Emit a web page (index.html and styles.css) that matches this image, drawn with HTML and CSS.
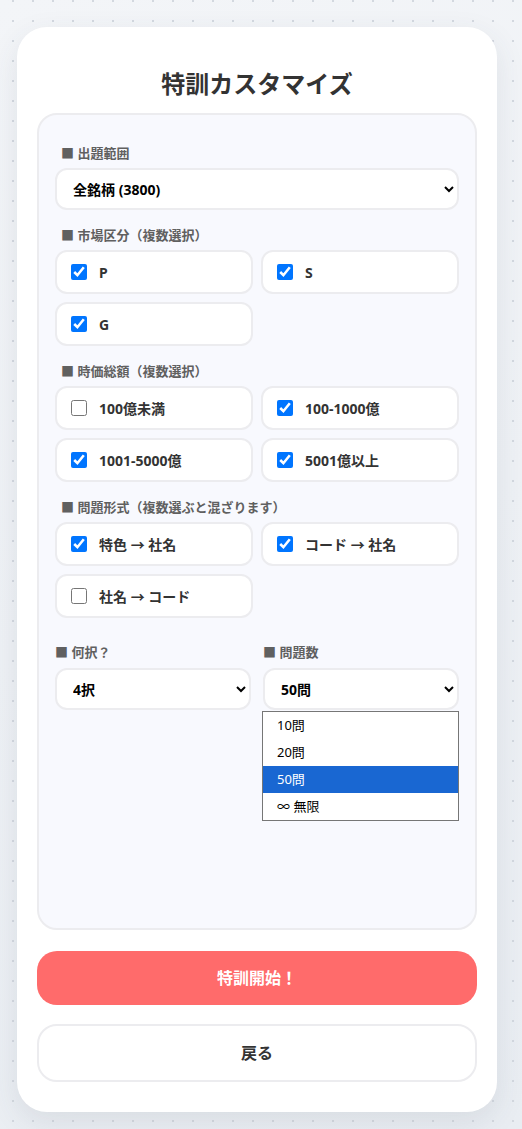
FILE: index.html
```html
<!DOCTYPE html>
<html lang="ja">
<head>
<meta charset="utf-8">
<title>特訓カスタマイズ</title>
<link rel="stylesheet" href="styles.css">
</head>
<body>
<div class="card">
  <h1 class="title">特訓カスタマイズ</h1>
  <div class="panel">
    <div class="group">
      <div class="label">■ 出題範囲</div>
      <select class="select">
        <option>全銘柄 (3800)</option>
      </select>
    </div>
    <div class="group">
      <div class="label">■ 市場区分（複数選択）</div>
      <div class="grid">
        <label class="item"><input type="checkbox" checked><span>P</span></label>
        <label class="item"><input type="checkbox" checked><span>S</span></label>
        <label class="item"><input type="checkbox" checked><span>G</span></label>
      </div>
    </div>
    <div class="group">
      <div class="label">■ 時価総額（複数選択）</div>
      <div class="grid">
        <label class="item"><input type="checkbox"><span>100億未満</span></label>
        <label class="item"><input type="checkbox" checked><span>100-1000億</span></label>
        <label class="item"><input type="checkbox" checked><span>1001-5000億</span></label>
        <label class="item"><input type="checkbox" checked><span>5001億以上</span></label>
      </div>
    </div>
    <div class="group">
      <div class="label">■ 問題形式（複数選ぶと混ざります）</div>
      <div class="grid">
        <label class="item"><input type="checkbox" checked><span>特色 → 社名</span></label>
        <label class="item"><input type="checkbox" checked><span>コード → 社名</span></label>
        <label class="item"><input type="checkbox"><span>社名 → コード</span></label>
      </div>
    </div>
    <div class="row2">
      <div class="cell">
        <div class="label label-flush">■ 何択？</div>
        <select class="select">
          <option>4択</option>
        </select>
      </div>
      <div class="cell cell-open">
        <div class="label label-flush">■ 問題数</div>
        <select class="select">
          <option>50問</option>
        </select>
        <ul class="popup">
          <li>10問</li>
          <li>20問</li>
          <li class="active">50問</li>
          <li>∞ 無限</li>
        </ul>
      </div>
    </div>
  </div>
  <button class="btn btn-start">特訓開始！</button>
  <button class="btn btn-back">戻る</button>
</div>
</body>
</html>
```
FILE: styles.css
```css
* { box-sizing: border-box; }
html, body { margin: 0; padding: 0; }
body {
  font-family: "Noto Sans", "Noto Sans CJK JP", sans-serif;
  background-color: #eef1f5;
  background-image:
    radial-gradient(circle, #d3d8df 1px, transparent 1.4px),
    linear-gradient(160deg, #f3f5f8 0%, #e9edf2 100%);
  background-size: 20px 20px, 100% 100%;
  background-position: 3px -9px, 0 0;
  min-height: 1129px;
  padding: 27px 0 17px 17px;
}
.card {
  width: 480px;
  background: #fff;
  border-radius: 30px;
  box-shadow: 0 10px 30px rgba(60, 70, 90, 0.10);
  padding: 40px 20px 30px;
}
.title {
  margin: 0 0 12px;
  text-align: center;
  font-size: 24px;
  line-height: 34px;
  font-weight: 700;
  color: #333;
}
.panel {
  height: 817px;
  background: #f8f9fe;
  border: 2px solid #ececef;
  border-radius: 20px;
  padding: 29px 16px 16px;
}
.group { margin-bottom: 16px; }
.label {
  font-size: 13px;
  line-height: 18px;
  font-weight: 700;
  color: #606060;
  margin: 0 0 6px 6px;
}
.label-flush { margin-left: 0; margin-bottom: 7px; }
.select {
  display: block;
  width: 100%;
  height: 42px;
  border: 2px solid #ececef;
  border-radius: 12px;
  background: #fff;
  padding: 0 8px 0 12px;
  font-family: "Noto Sans", "Noto Sans CJK JP", sans-serif;
  font-size: 14px;
  font-weight: 700;
  color: #000;
}
.grid {
  display: grid;
  grid-template-columns: 1fr 1fr;
  gap: 8px;
}
.item {
  display: flex;
  align-items: center;
  gap: 12px;
  height: 44px;
  background: #fff;
  border: 2px solid #ececef;
  border-radius: 12px;
  padding: 0 14px;
  font-size: 14px;
  font-weight: 700;
  color: #333;
}
.item input {
  margin: 0;
  width: 16px;
  height: 16px;
}
.row2 {
  display: grid;
  grid-template-columns: 1fr 1fr;
  gap: 12px;
  margin-top: 25px;
}
.cell-open { position: relative; }
.popup {
  position: absolute;
  left: -1px;
  right: 0;
  top: 68px;
  margin: 0;
  padding: 0;
  list-style: none;
  background: #fff;
  border: 1px solid #767676;
  font-size: 13px;
  color: #000;
}
.popup li {
  height: 27px;
  line-height: 27px;
  padding-left: 14px;
}
.popup li.active {
  background: #1967d2;
  color: #fff;
}
.btn {
  display: block;
  width: 100%;
  font-family: "Noto Sans", "Noto Sans CJK JP", sans-serif;
  font-size: 16px;
  line-height: 20px;
  font-weight: 700;
  padding: 17px;
  border-radius: 20px;
  cursor: pointer;
}
.btn-start {
  margin-top: 21px;
  border: none;
  background: #ff6b6b;
  color: #fff;
}
.btn-back {
  margin-top: 19px;
  border: 2px solid #ececef;
  background: #fff;
  color: #333;
}
```
